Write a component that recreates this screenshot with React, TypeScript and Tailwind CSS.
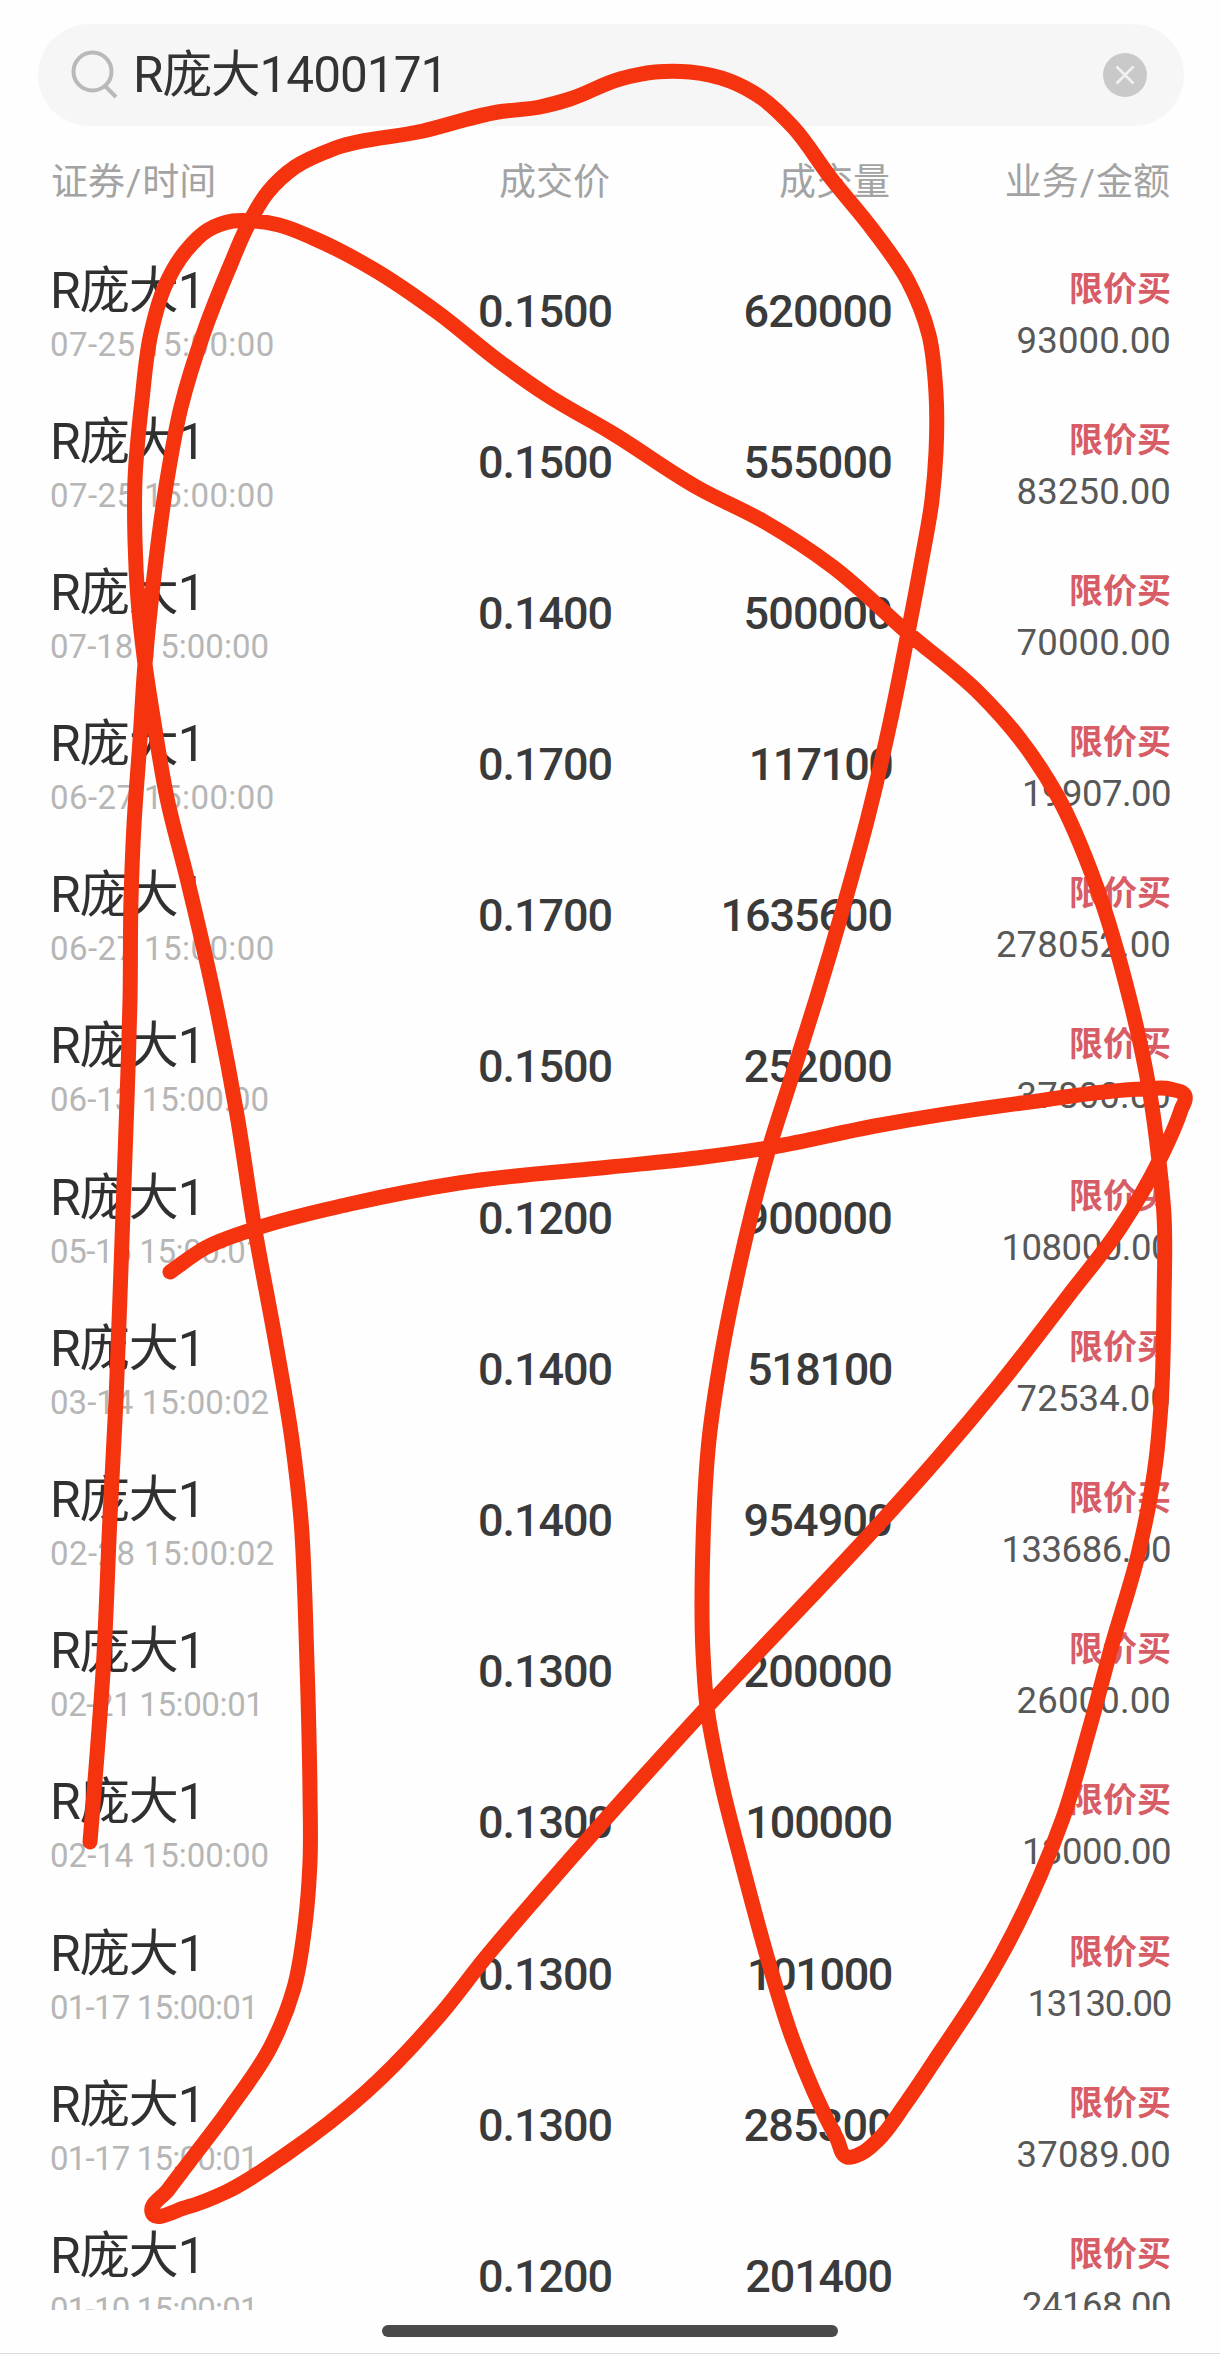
import React from 'react';

interface Trade {
  time: string;
  price: string;
  volume: string;
  amount: string;
}

const trades: Trade[] = [
  { time: '07-25 15:00:00', price: '0.1500', volume: '620000', amount: '93000.00' },
  { time: '07-25 15:00:00', price: '0.1500', volume: '555000', amount: '83250.00' },
  { time: '07-18 15:00:00', price: '0.1400', volume: '500000', amount: '70000.00' },
  { time: '06-27 15:00:00', price: '0.1700', volume: '117100', amount: '19907.00' },
  { time: '06-27 15:00:00', price: '0.1700', volume: '1635600', amount: '278052.00' },
  { time: '06-13 15:00:00', price: '0.1500', volume: '252000', amount: '37800.00' },
  { time: '05-16 15:00:01', price: '0.1200', volume: '900000', amount: '108000.00' },
  { time: '03-14 15:00:02', price: '0.1400', volume: '518100', amount: '72534.00' },
  { time: '02-28 15:00:02', price: '0.1400', volume: '954900', amount: '133686.00' },
  { time: '02-21 15:00:01', price: '0.1300', volume: '200000', amount: '26000.00' },
  { time: '02-14 15:00:00', price: '0.1300', volume: '100000', amount: '13000.00' },
  { time: '01-17 15:00:01', price: '0.1300', volume: '101000', amount: '13130.00' },
  { time: '01-17 15:00:01', price: '0.1300', volume: '285300', amount: '37089.00' },
  { time: '01-10 15:00:01', price: '0.1200', volume: '201400', amount: '24168.00' },
];

// Pen stroke drawn over the list, in page pixels
const stroke: number[][] = [
  [170, 1272], [205, 1248], [254, 1229], [350, 1204], [459, 1183], [610, 1167], [697, 1158], [773, 1147],
  [875, 1126], [1022, 1103], [1145, 1089], [1170, 1089], [1185, 1096], [1181, 1110], [1159, 1161], [1120, 1228],
  [1069, 1295], [1000, 1384], [938, 1458], [880, 1523], [707, 1707], [610, 1814],
  [545, 1888], [486, 1957], [440, 2015], [366, 2092], [288, 2153], [226, 2192], [187, 2207], [152, 2212],
  [168, 2190], [190, 2161], [230, 2108], [270, 2048], [294, 1988], [305, 1925], [310, 1862], [310, 1792],
  [308, 1696], [305, 1600], [301, 1520], [292, 1440], [276, 1344], [255, 1230], [237, 1115], [215, 1000],
  [187, 878], [167, 798], [154, 723], [145, 664], [138, 600], [135, 541], [135, 480], [142, 400],
  [151, 333], [165, 286], [185, 252], [208, 230], [233, 221], [255, 221], [279, 225], [313, 238], [373, 269],
  [437, 312], [500, 362], [547, 395], [612, 433], [700, 489], [763, 521], [833, 567],
  [908, 633], [980, 694], [1020, 739], [1058, 797], [1096, 885], [1130, 1000], [1149, 1088], [1159, 1161],
  [1164, 1215], [1164, 1300], [1161, 1405], [1156, 1460], [1138, 1555], [1112, 1645], [1089, 1730], [1063, 1818],
  [1040, 1876], [1002, 1954], [978, 1995], [941, 2051], [906, 2103], [878, 2140], [862, 2153], [847, 2157], [837, 2139],
  [793, 2040], [768, 1960], [743, 1868], [720, 1777], [707, 1707], [703, 1653], [703, 1543],
  [709, 1440], [722, 1352], [738, 1272], [768, 1152], [793, 1073], [816, 1000], [844, 905], [867, 821],
  [890, 723], [908, 633], [921, 564], [932, 500], [936, 452], [936, 393], [929, 335],
  [908, 281], [873, 230], [830, 177], [793, 127], [763, 99], [730, 81], [690, 72],
  [655, 72], [620, 79], [570, 99], [540, 107], [498, 112], [423, 131], [333, 149], [295, 167],
  [268, 192], [247, 227], [230, 266], [204, 332], [181, 407], [167, 480], [155, 568],
  [145, 664], [140, 740], [134, 825], [131, 900], [130, 1000], [127, 1100], [121, 1268], [116, 1400],
  [110, 1517], [103, 1672], [96, 1768], [90, 1842],
];

// Curve through every point; the tangent leans to the shorter neighbouring segment
const tangentAt = (pts: number[][], i: number) => {
  const p = pts[i];
  const a = pts[i - 1] ?? p;
  const b = pts[i + 1] ?? p;
  const la = Math.hypot(p[0] - a[0], p[1] - a[1]) || 1;
  const lb = Math.hypot(b[0] - p[0], b[1] - p[1]) || 1;
  const x = ((p[0] - a[0]) / la) * lb + ((b[0] - p[0]) / lb) * la;
  const y = ((p[1] - a[1]) / la) * lb + ((b[1] - p[1]) / lb) * la;
  const l = Math.hypot(x, y) || 1;
  return [x / l, y / l];
};

const smoothPath = (pts: number[][]) => {
  let d = `M${pts[0][0]} ${pts[0][1]}`;
  for (let i = 0; i < pts.length - 1; i++) {
    const b = pts[i];
    const c = pts[i + 1];
    const len = Math.hypot(c[0] - b[0], c[1] - b[1]) / 3;
    const t1 = tangentAt(pts, i);
    const t2 = tangentAt(pts, i + 1);
    d += `C${(b[0] + t1[0] * len).toFixed(1)} ${(b[1] + t1[1] * len).toFixed(1)} ${(c[0] - t2[0] * len).toFixed(1)} ${(c[1] - t2[1] * len).toFixed(1)} ${c[0]} ${c[1]}`;
  }
  return d;
};

interface DigitsProps {
  value: string;
  className: string;
  tracking?: number;
  oneTrim?: number;
}

const Digits = ({ value, className, tracking = 0, oneTrim = 0.04 }: DigitsProps) => {
  const ones = value.split('1').length - 1;
  const spacing = tracking - (oneTrim * ones) / value.length;
  return (
    <span className={`block whitespace-nowrap ${className}`} style={{ letterSpacing: `${spacing.toFixed(4)}em` }}>
      {value}
    </span>
  );
};

const SearchBar = () => (
  <div className="ml-[38px] mr-[36px] mt-[24px] flex h-[102px] items-center rounded-full bg-[#f6f6f6] pl-[32px] pr-[36px]">
    <svg className="h-[50px] w-[50px] shrink-0" viewBox="0 0 50 50" fill="none" stroke="#b9b9b9" strokeWidth="4">
      <circle cx="22.5" cy="21.5" r="19" />
      <path d="M35 36l11 11" />
    </svg>
    <span className="ml-[13px] flex-1 text-[49.5px] leading-[60px] tracking-[-0.02em] text-[#333]">R庞大1400171</span>
    <svg className="h-[46px] w-[46px] shrink-0" viewBox="0 0 46 46">
      <circle cx="23" cy="23" r="22" fill="#c9c9c9" />
      <path d="M14.500 14.500l17 17M31.500 14.500l-17 17" stroke="#f1f1f1" strokeWidth="2.500" />
    </svg>
  </div>
);

const TradeRow = ({ trade }: { trade: Trade }) => (
  <div className="flex h-[151.2px] shrink-0">
    <div className="w-[301px] pt-[25px]">
      <p className="text-[50px] leading-[60px] tracking-[-0.02em] text-[#303030]">R庞大1</p>
      <Digits value={trade.time} tracking={0.025} oneTrim={0.17} className="mt-[4px] text-[33px] leading-[40px] text-[#b6b6b6]" />
    </div>
    <Digits
      value={trade.price}
      tracking={-0.017}
      className="w-[261px] pt-[46px] text-right text-[45px] font-medium leading-[60px] text-[#3a3a3a]"
    />
    <Digits
      value={trade.volume}
      tracking={-0.018}
      className="w-[280px] pt-[46px] text-right text-[45px] font-medium leading-[60px] text-[#3a3a3a]"
    />
    <div className="w-[279px] pt-[33px] text-right">
      <p className="text-[34px] font-bold leading-[40px] text-[#d75c66]">限价买</p>
      <Digits value={trade.amount} tracking={0.004} oneTrim={0.15} className="mt-[12px] text-[36.5px] leading-[40px] text-[#585858]" />
    </div>
  </div>
);

export default function App() {
  return (
    <div className="relative flex h-[2354px] w-[1220px] flex-col overflow-hidden border-b border-[#dcdcdc] bg-[#fefefe] font-[Roboto,'Noto_Sans_CJK_SC',sans-serif]">
      <SearchBar />

      {/* Column titles */}
      <div className="mt-[27px] flex h-[60px] items-center pl-[51px] text-[37px] leading-[60px] text-[#a3a3a3]">
        <span className="w-[300px]">
          证券<span className="mx-[1px]">/</span>时间
        </span>
        <span className="w-[259px] text-right">成交价</span>
        <span className="w-[280px] text-right">成交量</span>
        <span className="w-[280px] text-right">
          业务<span className="mx-[1px]">/</span>金额
        </span>
      </div>

      {/* Trade list, cut off above the home indicator */}
      <div className="mt-[22.5px] flex h-[2074px] flex-col overflow-hidden pl-[50px]">
        {trades.map((trade, i) => (
          <TradeRow key={i} trade={trade} />
        ))}
      </div>

      <div className="mx-auto mt-[15px] h-[12px] w-[456px] rounded-full bg-[#4a4a4a]" />

      <svg className="pointer-events-none absolute left-0 top-0 h-[2354px] w-[1220px]" viewBox="0 0 1220 2354" fill="none">
        <path d={smoothPath(stroke)} stroke="#f5330f" strokeWidth="15" strokeLinecap="round" strokeLinejoin="round" />
      </svg>
    </div>
  );
}
